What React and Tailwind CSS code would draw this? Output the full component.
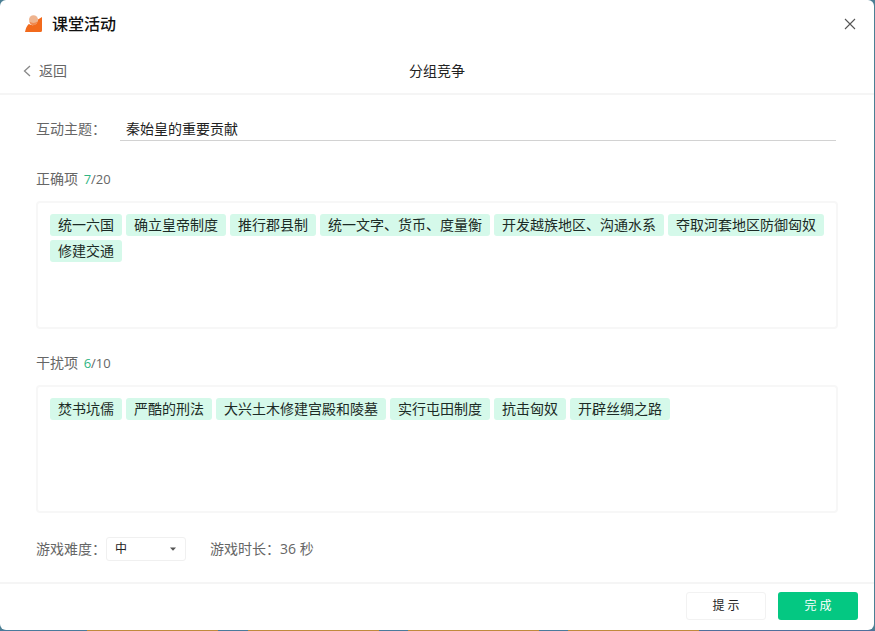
import React, { useState } from 'react';

const correctItems = [
  '统一六国',
  '确立皇帝制度',
  '推行郡县制',
  '统一文字、货币、度量衡',
  '开发越族地区、沟通水系',
  '夺取河套地区防御匈奴',
  '修建交通',
];

const distractors = [
  '焚书坑儒',
  '严酷的刑法',
  '大兴土木修建宫殿和陵墓',
  '实行屯田制度',
  '抗击匈奴',
  '开辟丝绸之路',
];

const Logo = () => (
  <svg viewBox="0 0 18 18" className="size-[18px]" aria-hidden="true">
    <path d="M0 17 Q1 11.5 3.8 9 Q8 11.5 11.5 8.5 L13 4.5 L17 2 V15.5 Q17 17 15.5 17 Z" fill="#f26a1c" />
    <circle cx="8.5" cy="4.8" r="4.5" fill="#efb48f" />
    <path d="M4.3 6.5 Q8.5 9.5 12.8 6.3 Q11.8 10.2 8.3 10.2 Q5 10.2 4.3 6.5Z" fill="#f08a50" />
  </svg>
);

const TagPanel = ({ title, items, max }) => (
  <section>
    <h2 className="text-sm leading-5 text-[#666]">
      {title}{' '}
      <span className="ml-0.5 text-[13px]">
        <span className="text-[#2fb583]">{items.length}</span>/{max}
      </span>
    </h2>
    <ul className="mt-3 flex min-h-32 flex-wrap content-start gap-1 rounded-[4px] border-2 border-[#f7f7f7] px-3 py-[11px]">
      {items.map((item) => (
        <li
          key={item}
          className="h-[22px] rounded-[3px] bg-[#d5f9ea] px-2 text-sm leading-[22px] text-[#1c2b26]"
        >
          {item}
        </li>
      ))}
    </ul>
  </section>
);

const App = () => {
  const [topic, setTopic] = useState('秦始皇的重要贡献');
  const [level, setLevel] = useState('中');

  return (
    <div className="flex min-h-screen flex-col bg-[#4b7f94] pr-px font-['Open_Sans','Noto_Sans_CJK_SC',sans-serif]">
      <div className="flex grow flex-col rounded-md bg-white">
        {/* Title bar */}
        <header className="border-b-2 border-[#f5f5f5]">
          <div className="flex h-12 items-center justify-between pr-[17px] pl-[25px]">
            <h1 className="flex items-center gap-[9px] text-base font-medium text-[#111]">
              <Logo />
              课堂活动
            </h1>
            <button type="button" aria-label="关闭" className="p-px text-[#555]">
              <svg viewBox="0 0 12 12" className="size-3" fill="none" stroke="currentColor" strokeWidth="1.1">
                <path d="M1 1 L11 11 M11 1 L1 11" />
              </svg>
            </button>
          </div>
          <div className="grid h-[45px] grid-cols-3 items-center px-[23px]">
            <button type="button" className="flex items-center gap-2 justify-self-start text-sm text-[#666]">
              <svg viewBox="0 0 8 12" className="h-3 w-2" fill="none" stroke="#888" strokeWidth="1.3">
                <path d="M7 1 L1.5 6 L7 11" />
              </svg>
              返回
            </button>
            <p className="text-center text-sm text-[#222]">分组竞争</p>
          </div>
        </header>

        <main className="flex grow flex-col px-9 pt-[22px]">
          <div className="flex items-center">
            <label htmlFor="topic" className="w-[84px] text-sm text-[#666]">
              互动主题：
            </label>
            <input
              id="topic"
              type="text"
              value={topic}
              onChange={(e) => setTopic(e.target.value)}
              className="mr-0.5 h-6 min-w-0 grow border-b border-[#d2d2d2] px-1.5 pb-0.5 text-sm text-[#222] outline-none"
            />
          </div>

          <div className="mt-7 flex flex-col gap-6">
            <TagPanel title="正确项" items={correctItems} max={20} />
            <TagPanel title="干扰项" items={distractors} max={10} />
          </div>

          {/* Game settings */}
          <div className="mt-6 flex items-center text-sm text-[#666]">
            <label htmlFor="level" className="w-[70px]">
              游戏难度：
            </label>
            <div className="relative">
              <select
                id="level"
                value={level}
                onChange={(e) => setLevel(e.target.value)}
                className="h-6 w-20 appearance-none rounded-[3px] border border-[#f0f0f0] bg-white px-2 text-xs text-[#222] outline-none"
              >
                <option>低</option>
                <option>中</option>
                <option>高</option>
              </select>
              <svg viewBox="0 0 6 4" className="pointer-events-none absolute top-2.5 right-2.5 h-1 w-1.5" fill="#555">
                <path d="M0 0.5 H6 L3 3.7 Z" />
              </svg>
            </div>
            <p className="ml-6">游戏时长：36 秒</p>
          </div>
        </main>

        <footer className="flex justify-end gap-3 border-t-2 border-[#f5f5f5] pt-2 pr-4 pb-2.5">
          <button type="button" className="h-7 w-20 rounded-[3px] border border-[#f2f2f2] text-xs text-[#222]">
            提 示
          </button>
          <button type="button" className="h-7 w-20 rounded-[3px] bg-[#04c882] text-xs text-white">
            完 成
          </button>
        </footer>
      </div>

      {/* Window edge */}
      <div className="flex h-px">
        <div className="w-1/10 bg-[#4a7a9c]" />
        <div className="w-[15%] bg-[#c08a3c]" />
        <div className="w-1/30 bg-[#4a7a9c]" />
        <div className="w-[15%] bg-[#c08a3c]" />
        <div className="w-1/30 bg-[#4a7a9c]" />
        <div className="w-[15%] bg-[#c08a3c]" />
        <div className="w-1/30 bg-[#4a7a9c]" />
        <div className="w-[15%] bg-[#c08a3c]" />
        <div className="grow bg-[#4f6f9c]" />
      </div>
    </div>
  );
};

export default App;
